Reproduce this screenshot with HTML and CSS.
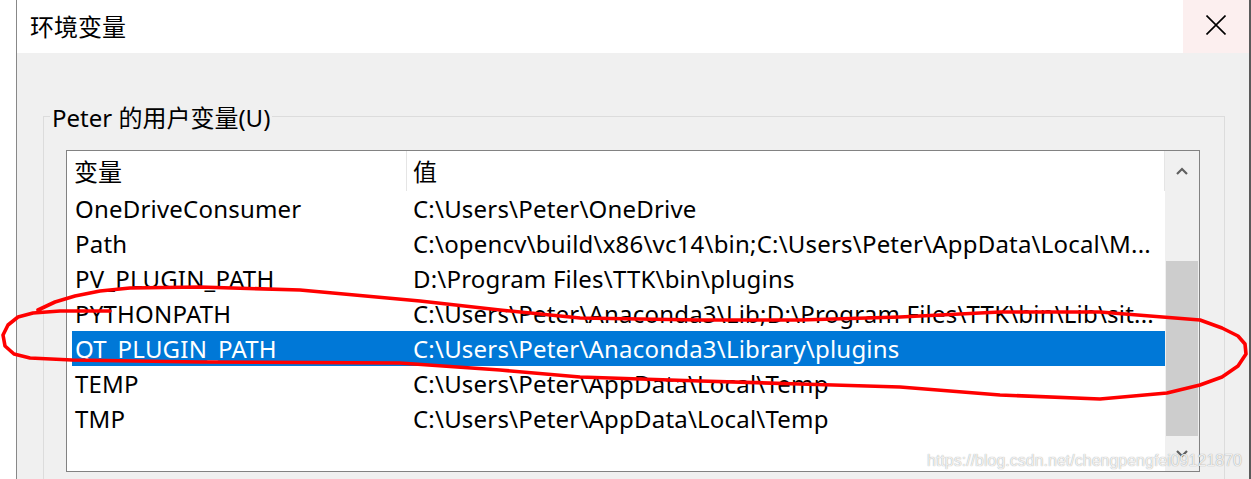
FILE: index.html
```html
<!DOCTYPE html>
<html lang="zh-CN">
<head>
    <meta charset="UTF-8">
    <meta name="viewport" content="width=device-width, initial-scale=1.0">
    <title>环境变量</title>
    <link rel="stylesheet" href="styles.css">
</head>
<body>
    <div class="window">
        <div class="titlebar">
            <div class="title">环境变量</div>
            <div class="close">
                <svg width="20" height="20" viewBox="0 0 20 20">
                    <path d="M0.5 0.5 L19.5 19.5 M19.5 0.5 L0.5 19.5" stroke="#000" stroke-width="1.6" fill="none"/>
                </svg>
            </div>
        </div>

        <div class="content">
            <fieldset class="group">
                <legend>Peter 的用户变量(U)</legend>

                <div class="listbox">
                    <div class="list">
                        <div class="list-header">
                            <div class="col-name">变量</div>
                            <div class="col-value">值</div>
                        </div>
                        <div class="row">
                            <div class="col-name">OneDriveConsumer</div>
                            <div class="col-value">C:\Users\Peter\OneDrive</div>
                        </div>
                        <div class="row">
                            <div class="col-name">Path</div>
                            <div class="col-value">C:\opencv\build\x86\vc14\bin;C:\Users\Peter\AppData\Local\M...</div>
                        </div>
                        <div class="row">
                            <div class="col-name">PV_PLUGIN_PATH</div>
                            <div class="col-value">D:\Program Files\TTK\bin\plugins</div>
                        </div>
                        <div class="row">
                            <div class="col-name">PYTHONPATH</div>
                            <div class="col-value">C:\Users\Peter\Anaconda3\Lib;D:\Program Files\TTK\bin\Lib\sit...</div>
                        </div>
                        <div class="row selected">
                            <div class="col-name">QT_PLUGIN_PATH</div>
                            <div class="col-value">C:\Users\Peter\Anaconda3\Library\plugins</div>
                        </div>
                        <div class="row">
                            <div class="col-name">TEMP</div>
                            <div class="col-value">C:\Users\Peter\AppData\Local\Temp</div>
                        </div>
                        <div class="row">
                            <div class="col-name">TMP</div>
                            <div class="col-value">C:\Users\Peter\AppData\Local\Temp</div>
                        </div>
                    </div>

                    <div class="scrollbar">
                        <div class="scroll-btn up">
                            <svg width="12" height="8" viewBox="0 0 12 8">
                                <polyline points="1,7 6,2 11,7" stroke="#606060" stroke-width="2.2" fill="none"/>
                            </svg>
                        </div>
                        <div class="scroll-track">
                            <div class="scroll-thumb"></div>
                        </div>
                        <div class="scroll-btn down">
                            <svg width="12" height="8" viewBox="0 0 12 8">
                                <polyline points="1,1 6,6 11,1" stroke="#606060" stroke-width="2.2" fill="none"/>
                            </svg>
                        </div>
                    </div>
                </div>
            </fieldset>
        </div>
    </div>

    <div class="watermark">https://blog.csdn.net/chengpengfei09121870</div>

    <!-- hand-drawn red circle around QT_PLUGIN_PATH -->
    <svg class="annotation" width="1251" height="479" viewBox="0 0 1251 479">
        <polyline fill="none" stroke="#ff0000" stroke-width="3.6" stroke-linejoin="round" stroke-linecap="round"
            points="110,311 60,311 33,313 18,317 8,325 3,335 5,346 14,354 30,358 72,360 200,362 400,363 500,370 580,377 700,381 800,384 900,387 1000,395 1100,399 1167,393 1200,385 1222,377 1238,366 1246,354 1245,344 1238,336 1222,328 1200,320 1100,312 1000,312 900,317 800,320 700,320 580,318 500,310 420,301 300,290 200,287 130,288 100,291 75,296 55,302 38,310"/>
    </svg>
</body>
</html>
```

FILE: styles.css
```css
body {
    margin: 0;
    width: 1251px;
    height: 479px;
    overflow: hidden;
    position: relative;
    background: #fff;
    font-family: "Noto Sans", "Noto Sans CJK SC", sans-serif;
    font-size: 24px;
    color: #000;
}
.window {
    margin-left: 16px;
    width: 1232px;
    height: 479px;
    border-left: 1px solid #888;
    border-right: 2px solid #5a5a5a;
    background: #f0f0f0;
}
.titlebar {
    height: 53px;
    background: #fff;
    display: flex;
    justify-content: space-between;
}
.title {
    padding-left: 13px;
    line-height: 53px;
}
.close {
    width: 66px;
    background: #fcefef;
    display: flex;
    justify-content: center;
    align-items: flex-start;
    padding-top: 15px;
    box-sizing: border-box;
}
.content {
    padding: 46px 24px 0 26px;
}
.group {
    margin: 0;
    min-width: 0;
    padding: 17px 24px 20px 22px;
    border: 1px solid #dcdcdc;
}
.group legend {
    margin-left: -16px;
    padding: 4px 2px 0;
    line-height: 30px;
}
.listbox {
    display: flex;
    height: 320px;
    border: 1px solid #828282;
    background: #fff;
}
.list {
    flex: 1;
    min-width: 0;
}
.list-header {
    display: flex;
    height: 40px;
    line-height: 38px;
}
.list-header .col-name {
    width: 332px;
    padding: 2px 0 0 7px;
    border-right: 1px solid #e5e5e5;
}
.list-header .col-value {
    flex: 1;
    padding: 2px 0 0 6px;
    border-right: 1px solid #e5e5e5;
}
.row {
    display: flex;
    height: 35px;
    box-sizing: border-box;
    padding-top: 1px;
    line-height: 34px;
    margin-left: 5px;
    white-space: nowrap;
    letter-spacing: 0.2px;
}
.row .col-name {
    width: 331px;
    padding-left: 3px;
}
.row .col-value {
    flex: 1;
    min-width: 0;
    padding-left: 7px;
    overflow: hidden;
}
.row.selected {
    background: #0078d7;
    color: #fff;
}
.scrollbar {
    width: 34px;
    background: #f0f0f0;
    display: flex;
    flex-direction: column;
}
.scroll-btn {
    display: flex;
    justify-content: center;
    align-items: center;
}
.scroll-btn.up {
    height: 40px;
}
.scroll-btn.down {
    height: 35px;
}
.scroll-track {
    flex: 1;
    padding-top: 70px;
}
.scroll-thumb {
    height: 175px;
    margin: 0 1px;
    background: #cdcdcd;
}
.watermark {
    position: absolute;
    right: 9px;
    bottom: 8px;
    font-family: "Liberation Sans", Arial, sans-serif;
    font-size: 16px;
    line-height: 20px;
    color: rgba(255, 255, 255, 0.85);
    text-shadow: 0 0 1px rgba(0, 0, 0, 0.45);
}
.annotation {
    position: absolute;
    left: 0;
    top: 0;
    pointer-events: none;
}
```
